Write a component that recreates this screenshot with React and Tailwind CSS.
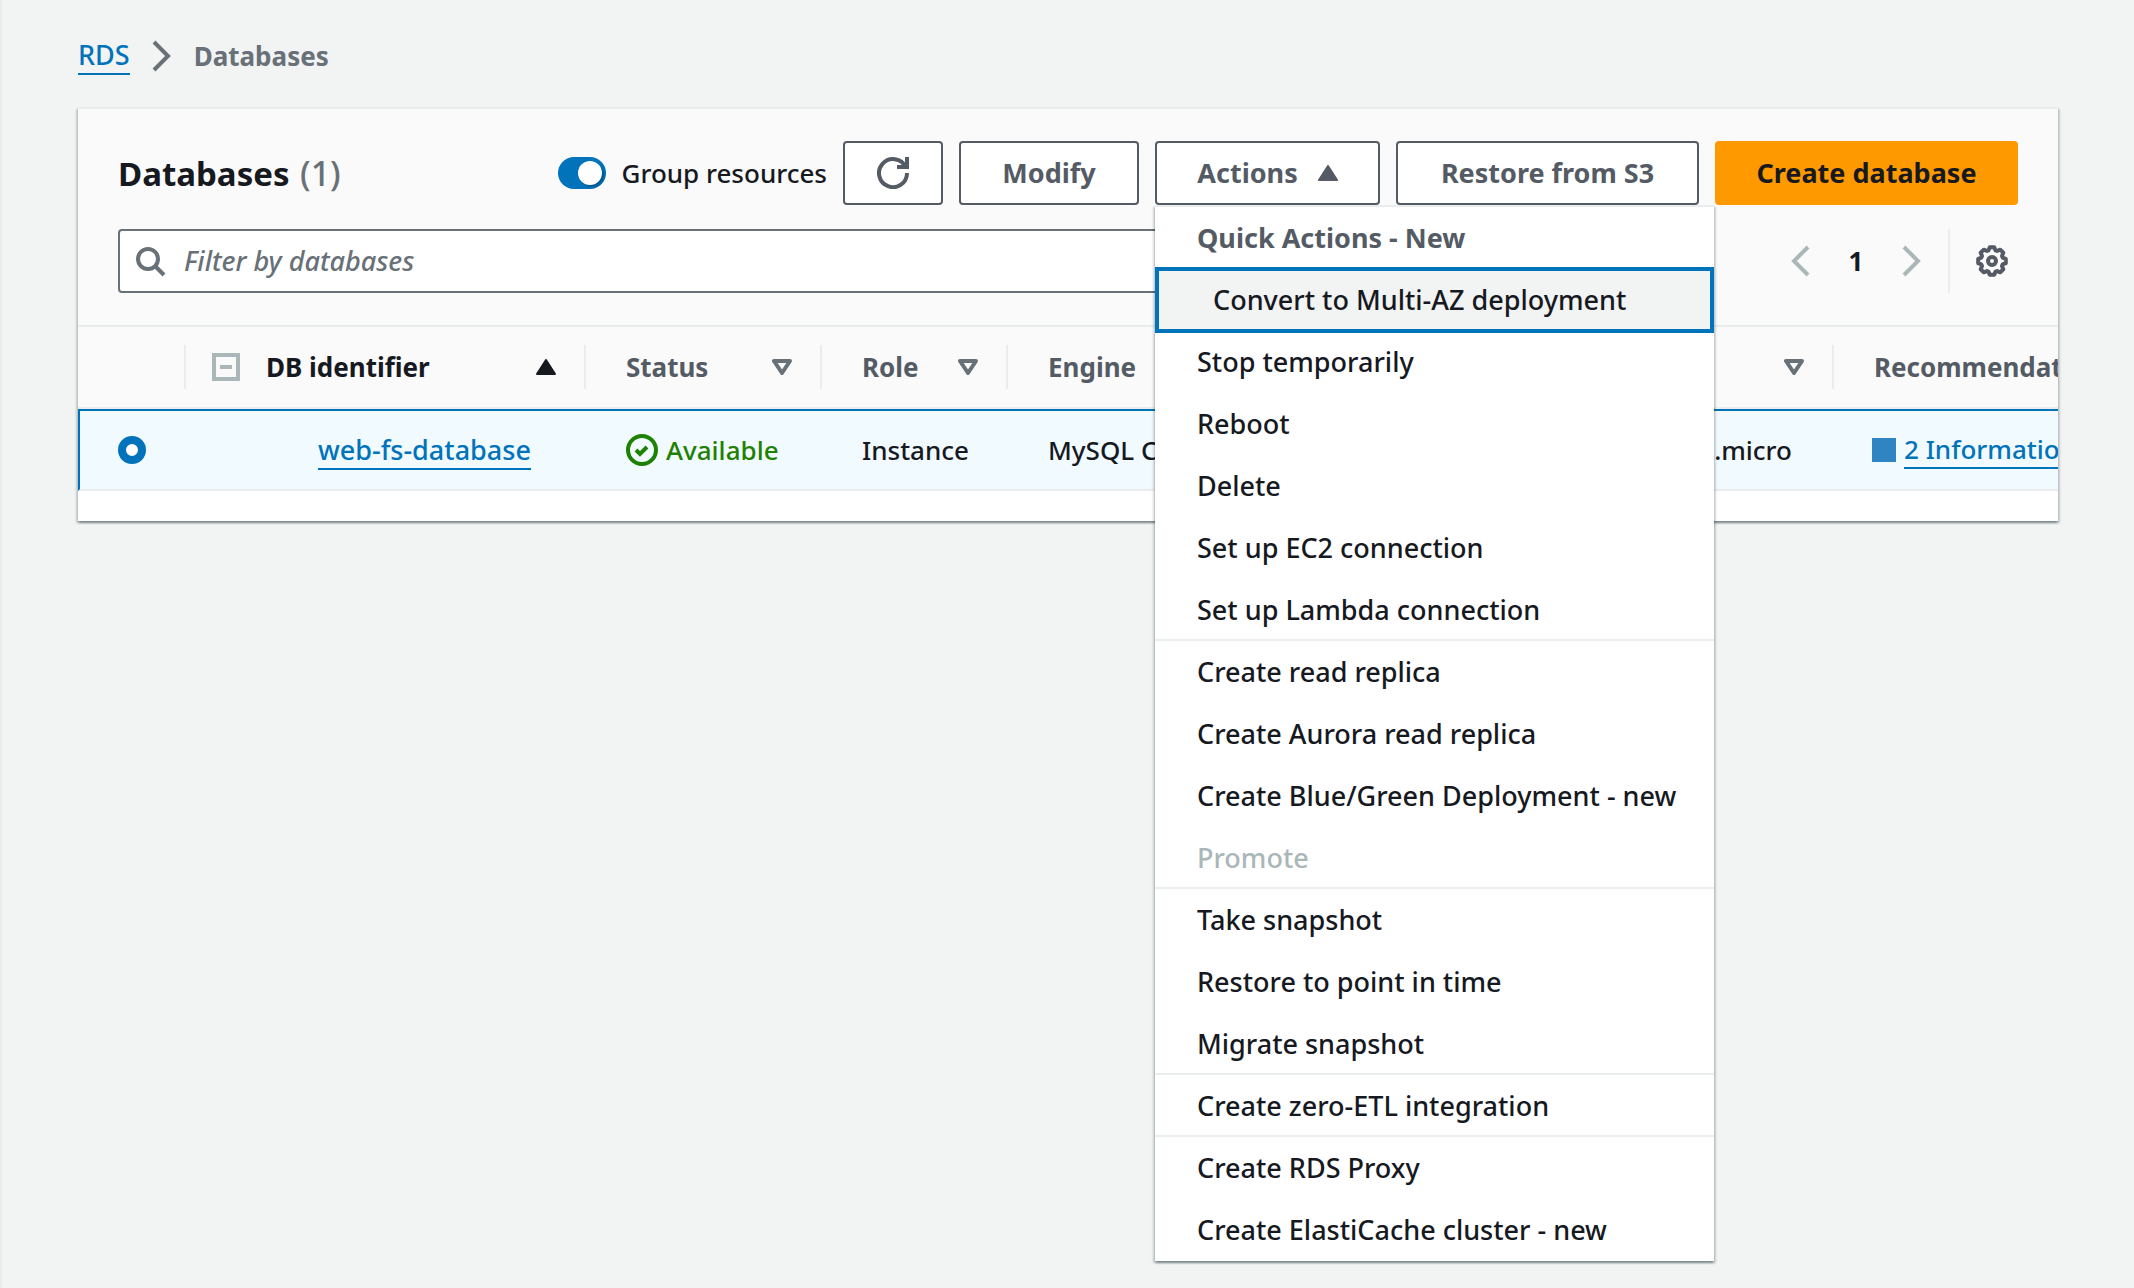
import React from "react";

const MENU = [
  { title: "Quick Actions - New", items: ["Convert to Multi-AZ deployment"] },
  { items: ["Stop temporarily", "Reboot", "Delete", "Set up EC2 connection", "Set up Lambda connection"] },
  { divided: true, items: ["Create read replica", "Create Aurora read replica", "Create Blue/Green Deployment - new", "Promote"] },
  { divided: true, items: ["Take snapshot", "Restore to point in time", "Migrate snapshot"] },
  { divided: true, items: ["Create zero-ETL integration"] },
  { divided: true, items: ["Create RDS Proxy", "Create ElastiCache cluster - new"] },
];

const HIGHLIGHTED = "Convert to Multi-AZ deployment";
const DISABLED = "Promote";

const SURFACE_SHADOW =
  "shadow-[0_2px_2px_0_rgba(0,28,36,0.3),2px_2px_2px_0_rgba(0,28,36,0.15),-2px_2px_2px_0_rgba(0,28,36,0.15)]";

// Eight-toothed cog outline, alternating between tooth and valley radii.
const GEAR_POINTS = Array.from({ length: 8 }, (_, i) => i * 45)
  .flatMap((angle) => [
    [angle - 9, 7],
    [angle + 9, 7],
    [angle + 18, 5.6],
    [angle + 27, 5.6],
  ])
  .map(([deg, r]) => {
    const a = (deg * Math.PI) / 180;
    return `${(8 + r * Math.cos(a)).toFixed(2)},${(8 + r * Math.sin(a)).toFixed(2)}`;
  })
  .join(" ");

function Icon({ children, className = "" }) {
  return (
    <svg viewBox="0 0 16 16" className={`size-8 shrink-0 fill-none stroke-current stroke-2 ${className}`} aria-hidden="true">
      {children}
    </svg>
  );
}

function SortDown() {
  return (
    <svg viewBox="0 0 20 16" className="h-4 w-5 shrink-0 fill-none stroke-[#687078]" strokeWidth="4" strokeLinejoin="round" aria-hidden="true">
      <path d="M2 2h16l-8 12z" />
    </svg>
  );
}

function CaretUp() {
  return (
    <svg viewBox="0 0 20 16" className="h-4 w-5 shrink-0 fill-current stroke-current" strokeWidth="2" strokeLinejoin="round" aria-hidden="true">
      <path d="M10 1l9 14H1z" />
    </svg>
  );
}

function Button({ children, className = "", ...rest }) {
  return (
    <button
      type="button"
      className={`flex h-16 items-center justify-center rounded-sm border-2 border-[#545b64] bg-white text-[27px] font-bold text-[#545b64] ${className}`}
      {...rest}
    >
      {children}
    </button>
  );
}

function HeaderCell({ children }) {
  return (
    <th scope="col" className="border-b-2 border-[#eaeded] p-0 text-left font-bold">
      <div className="flex h-11 items-center justify-between border-r-2 border-[#eaeded] pr-7 pl-10">
        <span>{children}</span>
        <SortDown />
      </div>
    </th>
  );
}

function Cell({ children, className = "pl-10" }) {
  return <td className={`border-t-2 border-b-2 border-t-[#0073bb] border-b-[#eaeded] p-0 ${className}`}>{children}</td>;
}

function ActionsMenu() {
  return (
    <div
      role="menu"
      aria-label="Actions"
      className={`absolute top-full left-0 z-10 w-[559px] border-t-2 border-[#eaeded] bg-white text-[27px] ${SURFACE_SHADOW}`}
    >
      {MENU.map((group, g) => (
        <div key={g} role="group" className="flex flex-col">
          {group.title && (
            <div className="flex h-[62px] items-center px-[42px] font-bold text-[#545b64]">{group.title}</div>
          )}
          {group.items.map((item, i) => {
            const active = item === HIGHLIGHTED;
            const disabled = item === DISABLED;
            return (
              <button
                key={item}
                type="button"
                role="menuitem"
                disabled={disabled}
                className={`flex h-[62px] items-center text-left whitespace-nowrap ${
                  active ? "mx-0.5 bg-[#f2f3f3] pl-14 outline-4 -outline-offset-2 outline-[#0073bb]" : "pl-[42px]"
                } ${disabled ? "text-[#aab7b8]" : "text-[#16191f]"} ${
                  group.divided && i === 0 ? "shadow-[0_-2px_0_0_#eaeded]" : ""
                }`}
              >
                {item}
              </button>
            );
          })}
        </div>
      ))}
    </div>
  );
}

export default function App() {
  return (
    <div className="min-h-screen border-l-2 border-[#eaeded] bg-[#f2f3f3] pt-9 pr-19 pl-19 font-['Noto_Sans',sans-serif] text-[26px] leading-10 font-medium text-[#16191f]">
      <nav aria-label="Breadcrumb" className="flex items-center text-[27px]">
        <a href="#rds" className="border-b-2 border-[#0073bb] leading-9 text-[#0073bb]">RDS</a>
        <Icon className="mx-4 text-[#687078]">
          <path d="m4 1 7 7-7 7" />
        </Icon>
        <span className="text-[26px] font-bold text-[#687078]">Databases</span>
      </nav>

      <main className={`mt-[31px] border-t-2 border-[#eaeded] bg-white ${SURFACE_SHADOW}`}>
        <header className="border-b-2 border-[#eaeded] bg-[#fafafa] px-10 py-8">
          <div className="flex items-center gap-4">
            <h1 className="mr-auto text-[33px] font-bold">
              Databases <span className="ml-0.5 text-[34px] font-medium text-[#687078]">(1)</span>
            </h1>
            <label className="flex items-center gap-4 whitespace-nowrap">
              <input
                type="checkbox"
                role="switch"
                defaultChecked
                className="flex h-8 w-12 appearance-none items-center justify-end rounded-full bg-[#0073bb] px-1 before:size-6 before:rounded-full before:bg-white before:shadow-[2px_2px_2px_rgba(0,28,36,0.3)]"
              />
              Group resources
            </label>
            <Button className="w-25" aria-label="Refresh">
              <Icon>
                <path d="M10 5h5V0M15 8a7 7 0 1 1-.7-3" />
              </Icon>
            </Button>
            <Button className="w-45">Modify</Button>
            <div className="relative">
              <Button className="w-[225px] gap-5" aria-haspopup="menu" aria-expanded="true">
                Actions
                <CaretUp />
              </Button>
              <ActionsMenu />
            </div>
            <Button className="w-[303px]">Restore from S3</Button>
            <button type="button" className="h-16 w-[303px] rounded-sm bg-[#ff9900] text-[27px] font-bold">
              Create database
            </button>
          </div>

          <div className="mt-6 flex items-center">
            <label className="flex h-16 flex-1 items-center gap-4 rounded-sm border-2 border-[#687078] bg-white px-4 text-[#687078]">
              <Icon>
                <circle cx="6" cy="7" r="5" />
                <path d="m9.5 10.5 4.5 4.5" />
              </Icon>
              <input
                type="search"
                aria-label="Filter by databases"
                placeholder="Filter by databases"
                className="w-full text-[27px] text-[#16191f] outline-none placeholder:text-[#687078] placeholder:italic"
              />
            </label>
            <div className="ml-20 flex h-16 items-center border-r-2 border-[#eaeded] pr-5">
              <button type="button" disabled aria-label="Previous page" className="text-[#aab7b8]">
                <Icon><path d="m12 1-7 7 7 7" /></Icon>
              </button>
              <button type="button" aria-current="page" className="w-20 font-bold">1</button>
              <button type="button" disabled aria-label="Next page" className="text-[#aab7b8]">
                <Icon><path d="m4 1 7 7-7 7" /></Icon>
              </button>
            </div>
            <button type="button" aria-label="Preferences" className="mr-2.5 ml-6.5 text-[#545b64]">
              <Icon>
                <circle cx="8" cy="8" r="2" />
                <polygon points={GEAR_POINTS} strokeLinejoin="round" />
              </Icon>
            </button>
          </div>
        </header>

        <div className="overflow-hidden pb-[30px]">
          <table className="w-[2200px] table-fixed border-separate border-spacing-0 whitespace-nowrap">
            <colgroup>
              <col className="w-[108px]" />
              <col className="w-[400px]" />
              <col className="w-[236px]" />
              <col className="w-[186px]" />
              <col className="w-[286px]" />
              <col className="w-[316px]" />
              <col className="w-[224px]" />
              <col />
            </colgroup>
            <thead className="bg-[#fafafa] text-[#545b64]">
              <tr className="h-[82px]">
                <th scope="col" className="border-b-2 border-[#eaeded] p-0" aria-label="Selection">
                  <div className="h-11 border-r-2 border-[#eaeded]" />
                </th>
                <th scope="col" className="border-b-2 border-[#eaeded] p-0 text-left font-bold text-[#16191f]" aria-sort="ascending">
                  <div className="flex h-11 items-center border-r-2 border-[#eaeded] pr-7 pl-6.5">
                    <button type="button" aria-label="Collapse all" className="flex size-7 items-center justify-center border-4 border-[#aab7b8]">
                      <span className="h-1 w-3 bg-[#aab7b8]" />
                    </button>
                    <span className="mr-auto ml-6.5">DB identifier</span>
                    <CaretUp />
                  </div>
                </th>
                <HeaderCell>Status</HeaderCell>
                <HeaderCell>Role</HeaderCell>
                <HeaderCell>Engine</HeaderCell>
                <HeaderCell>Region &amp; AZ</HeaderCell>
                <HeaderCell>Size</HeaderCell>
                <HeaderCell>Recommendations</HeaderCell>
              </tr>
            </thead>
            <tbody>
              <tr className="h-[82px] bg-[#f1faff]">
                <Cell className="border-l-2 border-l-[#0073bb] pl-[38px]">
                  <input type="radio" name="database" defaultChecked aria-label="web-fs-database" className="block size-7 appearance-none rounded-full border-8 border-[#0073bb] bg-white" />
                </Cell>
                <Cell className="pl-33">
                  <a href="#web-fs-database" className="border-b-2 border-[#0073bb] text-[27px] text-[#0073bb]">web-fs-database</a>
                </Cell>
                <Cell>
                  <span className="flex items-center gap-2 text-[#1d8102]">
                    <Icon>
                      <circle cx="8" cy="8" r="7" />
                      <path d="m5 8 2 2 3.5-3.5" />
                    </Icon>
                    Available
                  </span>
                </Cell>
                <Cell>Instance</Cell>
                <Cell>MySQL Community</Cell>
                <Cell>us-east-1a</Cell>
                <Cell>db.t3.micro</Cell>
                <Cell className="pl-[38px]">
                  <span className="flex items-center gap-2">
                    <span className="size-6 bg-[#3184c2]" />
                    <a href="#recommendations" className="border-b-2 border-[#0073bb] leading-9 text-[#0073bb]">2 Informational</a>
                  </span>
                </Cell>
              </tr>
            </tbody>
          </table>
        </div>
      </main>
    </div>
  );
}
